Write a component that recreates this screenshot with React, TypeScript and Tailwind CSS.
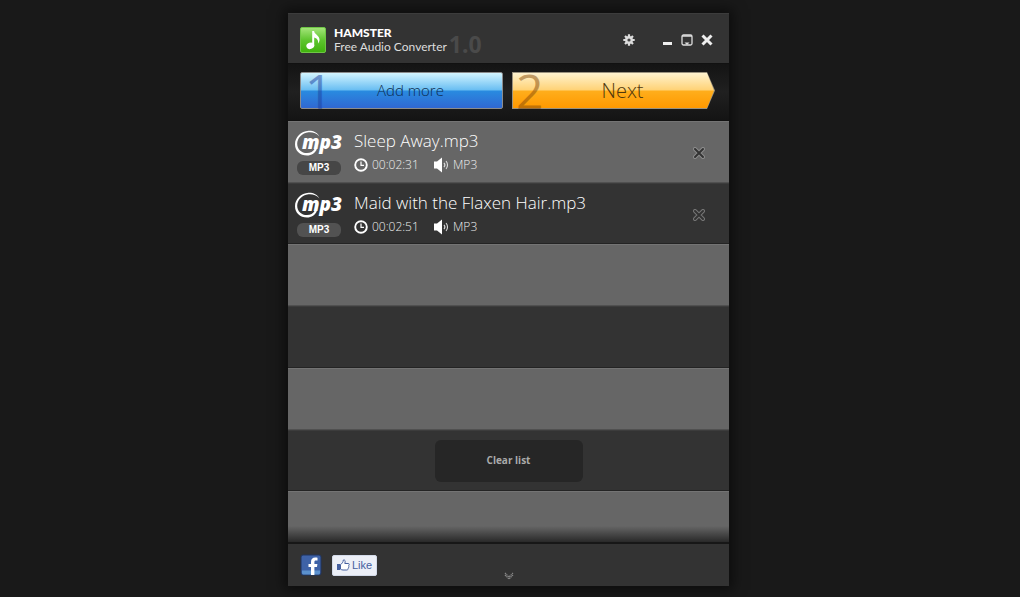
import type { ReactNode } from "react";

type Track = {
  title: string;
  duration: string;
  format: string;
};

const tracks: Track[] = [
  { title: "Sleep Away.mp3", duration: "00:02:31", format: "MP3" },
  { title: "Maid with the Flaxen Hair.mp3", duration: "00:02:51", format: "MP3" },
];

const NoteLogo = () => (
  <svg width="26" height="26" viewBox="0 0 26 26" className="shrink-0">
    <defs>
      <linearGradient id="logo" x1="0" y1="0" x2="0" y2="1">
        <stop offset="0" stopColor="#a6e57c" />
        <stop offset="0.5" stopColor="#5fc52f" />
        <stop offset="1" stopColor="#3fb20d" />
      </linearGradient>
    </defs>
    <rect x="0.5" y="0.5" width="25" height="25" rx="1.5" fill="url(#logo)" stroke="#6fc646" />
    <ellipse cx="10.3" cy="18.8" rx="4" ry="3.2" fill="#fff" transform="rotate(-18 10.3 18.8)" />
    <path
      d="M12.2 4h1.900c.3 3.200 5.400 4.700 5.400 8.700 0 1.500-.6 2.800-1.500 3.900.7-3.400-.9-5.300-3.800-6.200v8.500h-2z"
      fill="#fff"
    />
  </svg>
);

const Mp3Logo = () => (
  <svg width="50" height="28" viewBox="0 0 50 28" fill="#fff">
    <path d="M25.500 7.500C22.500 3.800 18.500 2.900 14.500 3.200 8 3.900 3.200 9 3.200 14.700c0 5.600 4.300 9.300 9.800 9.300 3.300 0 6.300-1.400 7.800-4.500h2.200c-1.500 4.700-5.500 7-10 7C6 26.500 1 21.800 1 15.200 1 8 7 2.200 14.500 1.700c4.500-.2 9 1.500 11 5.800z" />
    <text
      x="8"
      y="20"
      className="font-['Open_Sans',sans-serif] text-[19px] font-extrabold italic"
    >
      mp3
    </text>
  </svg>
);

const ClockIcon = () => (
  <svg width="14" height="14" viewBox="0 0 14 14">
    <circle cx="7" cy="7" r="5.800" fill="none" stroke="#fff" strokeWidth="1.900" />
    <path d="M7 3.500V7.300h3" fill="none" stroke="#fff" strokeWidth="1.200" />
  </svg>
);

const SpeakerIcon = () => (
  <svg width="15" height="16" viewBox="0 0 15 16">
    <path d="M0 4.500h3L8 .5v15l-5-4H0z" fill="#fff" />
    <path d="M10 5.800c1 1.200 1 3.200 0 4.400M12 4c2 2.200 2 5.800 0 8" fill="none" stroke="#ddd" strokeWidth="1.100" />
  </svg>
);

const GearIcon = () => (
  <svg width="12" height="12" viewBox="0 0 12 12">
    <g stroke="#ddd" strokeWidth="2.200">
      <path d="M6 .3v11.400M.3 6h11.400M2 2l8 8M10 2l-8 8" />
    </g>
    <circle cx="6" cy="6" r="3.900" fill="#ddd" />
    <circle cx="6" cy="6" r="1.600" fill="#444" />
  </svg>
);

const IconButton = ({ label, children }: { label: string; children: ReactNode }) => (
  <button aria-label={label} className="flex h-5 w-5 items-center justify-center">
    {children}
  </button>
);

const Header = () => (
  <header className="flex h-[50px] items-center border-t border-[#3c3c3c] bg-[#333] px-3 pt-0.5">
    <NoteLogo />
    <div className="ml-2 font-['Lato',sans-serif] text-xs leading-[14px]">
      <h1 className="font-black text-white">HAMSTER</h1>
      <p className="text-[#ddd]">Free Audio Converter</p>
    </div>
    <span className="mt-2 ml-0.5 font-['Noto_Sans',sans-serif] text-[23px] leading-6 font-bold text-[#4a4a4a]">
      1.0
    </span>
    <div className="ml-auto flex items-center">
      <IconButton label="Settings">
        <GearIcon />
      </IconButton>
      <div className="ml-[18px] flex">
        <IconButton label="Minimize">
          <svg width="10" height="10">
            <path d="M1 8.500h9" stroke="#eee" strokeWidth="3" />
          </svg>
        </IconButton>
        <IconButton label="Compact view">
          <svg width="12" height="12" fill="none" stroke="#ddd">
            <rect x="1" y="1" width="10" height="10" rx="1.500" strokeWidth="1.300" />
            <path d="M1 2h10" strokeWidth="1.500" />
            <path d="M3.500 8.500h5L6 11z" fill="#ddd" stroke="none" />
          </svg>
        </IconButton>
        <IconButton label="Close">
          <svg width="12" height="12">
            <path d="M1.500 1.500l9 9M10.500 1.500l-9 9" stroke="#eee" strokeWidth="3" />
          </svg>
        </IconButton>
      </div>
    </div>
  </header>
);

const Steps = () => (
  <div className="flex h-[58px] gap-[9px] border-y border-[#111] bg-linear-to-b from-[#141414] via-[#202020] to-[#141414] px-3 pt-2 font-['Open_Sans',sans-serif]">
    <button className="relative flex h-[37px] w-[203px] items-center justify-center rounded-xs border border-[#8c8c8c] bg-[linear-gradient(#d3f5ff,#68bdf2_49%,#298be0_51%,#3068d2)] pl-[18px] text-[15px] font-light text-[#0e2c50]">
      <span className="absolute top-0 left-1 text-5xl leading-[35px] font-normal text-[#1d3f9c]/50">1</span>
      Add more
    </button>
    <button className="relative h-[37px] w-[203px] bg-[#9b927e] p-px text-xl font-light text-[#4f370c] [clip-path:polygon(0_0,195px_0,100%_50%,195px_100%,0_100%)]">
      <span className="flex h-full items-center justify-center bg-[linear-gradient(#fff3cf,#ffd275_49%,#ffae1c_51%,#ff9900)] pl-[18px] [clip-path:polygon(0_0,194px_0,100%_50%,194px_100%,0_100%)]">
        Next
      </span>
      <span className="absolute top-0 left-1 text-5xl leading-[37px] font-normal text-[#854a08]/50">2</span>
    </button>
  </div>
);

const TrackRow = ({ track, active }: { track: Track; active: boolean }) => (
  <>
    <div className="flex w-[50px] flex-col items-center">
      <Mp3Logo />
      <span
        className={`mt-1 h-[14px] w-11 rounded-md text-center font-['Liberation_Sans',sans-serif] text-[10px] leading-[14px] font-bold text-white ${active ? "bg-[#464646]" : "bg-[#525252]"}`}
      >
        {track.format}
      </span>
    </div>
    <div className="ml-[10px] min-w-0 flex-1 font-['Open_Sans',sans-serif] font-light">
      <h2 className="truncate text-[17px] leading-6 text-white">{track.title}</h2>
      <div className="flex items-center text-xs leading-6 text-[#eee]">
        <ClockIcon />
        <span className="ml-1 w-[62px]">{track.duration}</span>
        <SpeakerIcon />
        <span className="ml-1">{track.format}</span>
      </div>
    </div>
    <button aria-label={`Remove ${track.title}`} className="mt-3 mr-3 flex h-6 w-6 items-center justify-center">
      <svg width="12" height="12" strokeLinecap="round">
        <path d="M2 2l8 8M10 2l-8 8" stroke={active ? "#8c8c8c" : "#777"} strokeWidth="4" />
        <path d="M2 2l8 8M10 2l-8 8" stroke="#333" strokeWidth="2" />
      </svg>
    </button>
  </>
);

const TrackList = () => (
  <main className="relative h-[421px] overflow-hidden">
    <ul className="grid h-[432px] grid-rows-7">
      {[0, 1, 2, 3, 4, 5, 6].map((i) => (
        <li
          key={i}
          className="flex items-start border-t border-b border-t-[#3c3c3c] border-b-[#242424] bg-[#333] px-[6px] pt-[7px] odd:border-t-[#747474] odd:border-b-[#505050] odd:bg-[#666]"
        >
          {tracks[i] && <TrackRow track={tracks[i]} active={i === 0} />}
          {i === 5 && (
            <button className="mx-auto mt-0.5 h-[42px] w-[148px] rounded-md bg-[#262626] font-['Open_Sans',sans-serif] text-[10px] font-bold text-[#aaa]">
              Clear list
            </button>
          )}
        </li>
      ))}
    </ul>
    <div className="pointer-events-none absolute inset-x-0 bottom-0 h-4 bg-linear-to-b from-transparent to-black/60" />
  </main>
);

const Footer = () => (
  <footer className="relative flex h-[44px] items-center gap-[10px] border-t-2 border-t-[#171717] bg-[#333] px-3">
    <a href="#facebook" aria-label="Facebook">
      <svg width="22" height="22" viewBox="0 0 22 22">
        <rect x="1" y="1" width="20" height="20" rx="2" fill="#3e62a7" stroke="#20345f" />
        <path d="M2 16.500h18V19a1.500 1.500 0 0 1-1.500 1.500h-15A1.500 1.500 0 0 1 2 19z" fill="#5b91cd" />
        <path
          d="M11 21v-8H8.500v-3H11V8c0-3 1.500-4.500 4.300-4.500.9 0 1.700.1 2.200.2v2.800H16c-1.300 0-1.600.6-1.600 1.600V10h3l-.4 3h-2.600v8z"
          fill="#fff"
        />
      </svg>
    </a>
    <button className="flex h-[21px] w-[45px] items-center justify-center gap-0.5 rounded-xs border border-[#d3dae9] bg-[#eceff7] font-['Liberation_Sans',sans-serif] text-[11px] text-[#4560a0]">
      <svg width="13" height="12" viewBox="0 0 13 12">
        <path d="M0 5h3v6H0z" fill="#4560a0" />
        <path
          d="M3.500 5.500C5 4.800 6.300 3 6.300 1c1.500-.6 2.400.8 1.500 3.500h3.500c1.200 0 1.200 1.500.3 1.800.7.5.5 1.500-.2 1.700.4.600.200 1.300-.4 1.500.2.900-.4 1.500-1.200 1.500H6c-1 0-1.700-.4-2.500-.8z"
          fill="#fff"
          stroke="#4560a0"
        />
      </svg>
      Like
    </button>
    <button aria-label="Expand" className="absolute bottom-1 left-1/2 flex h-3 w-3 -translate-x-1/2 items-center justify-center">
      <svg width="10" height="8" fill="none" stroke="#888" strokeWidth="1.200" strokeDasharray="1.400 0.600">
        <path d="M1 1l4 4 4-4M1 3l4 4 4-4" />
      </svg>
    </button>
  </footer>
);

const App = () => (
  <div className="min-h-screen bg-[#191919] pt-[13px] pr-[19px] pb-[11px] pl-4">
    <div className="mx-auto w-full max-w-[441px] shadow-[0_0_12px_4px_rgba(0,0,0,0.5)]">
      <Header />
      <Steps />
      <TrackList />
      <Footer />
    </div>
  </div>
);

export default App;
